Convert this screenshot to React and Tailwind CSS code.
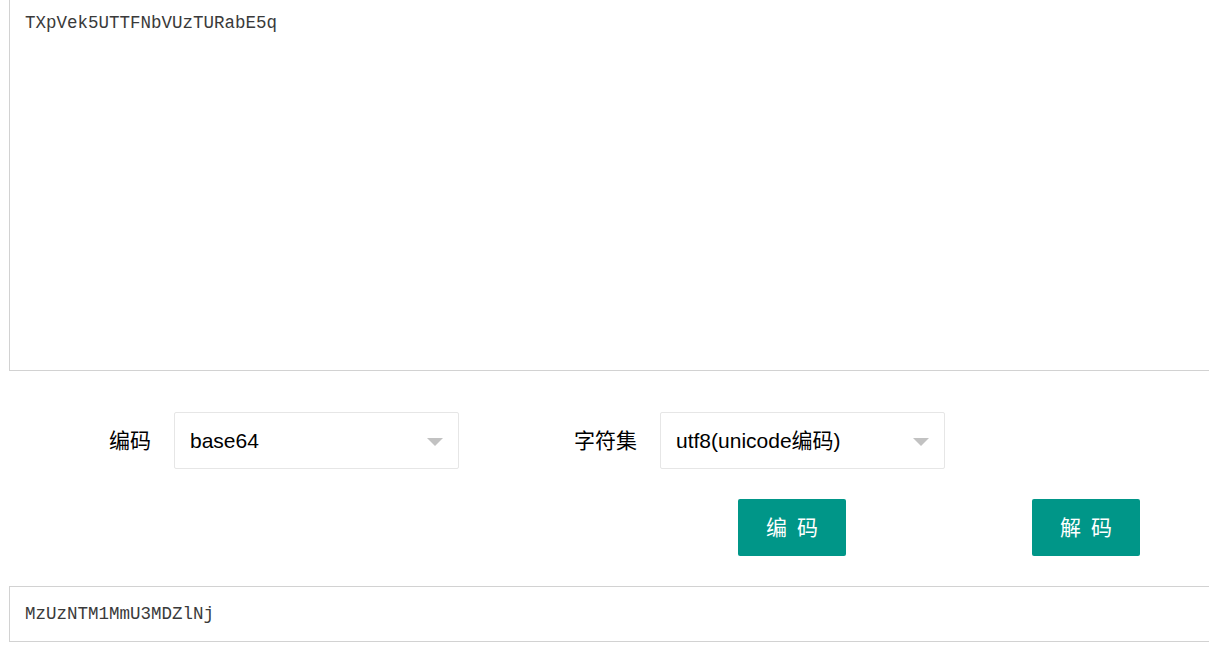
export default function App() {
  const mono = { fontFamily: '"Liberation Mono", "Noto Sans CJK SC", monospace' };

  return (
    <div
      className="h-[649px] w-[1209px] overflow-hidden bg-white text-[#333]"
      style={{ fontFamily: '"Liberation Sans", "Noto Sans CJK SC", sans-serif' }}
    >
      <div
        className="-mt-[8px] ml-[9px] h-[379px] w-[1230px] border border-[#d2d2d2] px-[15px] pt-[20px] text-[17.5px] leading-[20px] text-[#3a3a3a]"
        style={mono}
      >
        TXpVek5UTTFNbVUzTURabE5q
      </div>

      <div className="mt-[41px] flex items-center">
        <label className="ml-[61px] mr-[23px] w-[90px] text-right text-[21px] text-black">编码</label>
        <div className="relative flex h-[57px] w-[285px] items-center rounded-[2px] border border-[#e6e6e6] pl-[15px] text-[21px] text-black">
          base64
          <span className="absolute right-[15px] top-[25px] h-0 w-0 border-x-[8px] border-t-[8px] border-x-transparent border-t-[#c2c2c2]" />
        </div>
        <label className="mr-[23px] w-[178px] text-right text-[21px] text-black">字符集</label>
        <div className="relative flex h-[57px] w-[285px] items-center rounded-[2px] border border-[#e6e6e6] pl-[15px] text-[21px] text-black">
          utf8(unicode编码)
          <span className="absolute right-[15px] top-[25px] h-0 w-0 border-x-[8px] border-t-[8px] border-x-transparent border-t-[#c2c2c2]" />
        </div>
      </div>

      <div className="mt-[30px] flex justify-end gap-[186px] pr-[69px]">
        <button className="h-[57px] w-[108px] rounded-[2px] bg-[#009688] text-[21px] tracking-[10px] text-white indent-[10px]">
          编码
        </button>
        <button className="h-[57px] w-[108px] rounded-[2px] bg-[#009688] text-[21px] tracking-[10px] text-white indent-[10px]">
          解码
        </button>
      </div>

      <div
        className="ml-[9px] mt-[30px] flex h-[56px] w-[1230px] items-center border border-[#d2d2d2] px-[15px] text-[17.5px] text-[#3a3a3a]"
        style={mono}
      >
        MzUzNTM1MmU3MDZlNj
      </div>
    </div>
  );
}
